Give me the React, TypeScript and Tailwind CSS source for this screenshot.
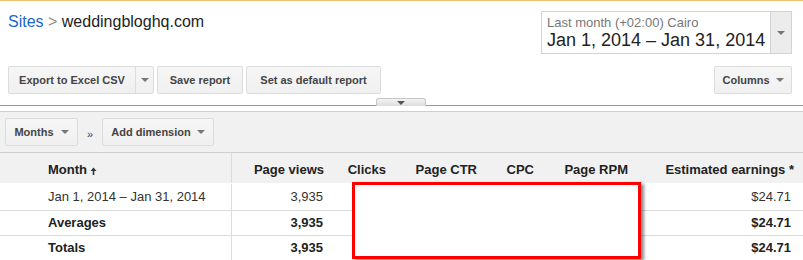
import type { ReactNode } from 'react';

function Caret({ color = '#777' }: { color?: string }) {
  return (
    <span
      className="inline-block w-0 h-0 border-l-[4px] border-r-[4px] border-t-[4px] border-l-transparent border-r-transparent"
      style={{ borderTopColor: color }}
    />
  );
}

function Btn({ children, className = '' }: { children: ReactNode; className?: string }) {
  return (
    <div
      className={`h-[28px] flex items-center justify-center border border-[#dcdcdc] rounded-[2px] bg-gradient-to-b from-[#f6f6f6] to-[#f0f0f0] text-[11px] font-bold text-[#444] ${className}`}
    >
      {children}
    </div>
  );
}

const COLS = 'grid grid-cols-[232px_100px_62px_91px_57px_94px_1fr]';

const ROWS = [
  { label: 'Jan 1, 2014 – Jan 31, 2014', views: '3,935', earn: '$24.71', bold: false, h: 'h-[28px] pt-px' },
  { label: 'Averages', views: '3,935', earn: '$24.71', bold: true, h: 'h-[25px]' },
  { label: 'Totals', views: '3,935', earn: '$24.71', bold: true, h: 'h-[25px]' },
];

export default function App() {
  return (
    <div className="w-[803px] h-[260px] overflow-hidden bg-white font-['Liberation_Sans',Arial,sans-serif] text-[#222]">
      {/* Top accent */}
      <div className="h-px bg-[#f0c36d]" />

      {/* Title + date range */}
      <div className="flex items-start justify-between pl-2 pr-[11px] pt-[10px]">
        <div className="mt-px text-[16px] leading-[20px]">
          <span className="text-[#1a66cc]">Sites</span>
          <span className="text-[#888]"> &gt; </span>
          <span className="text-[#222]">weddingbloghq.com</span>
        </div>
        <div className="w-[251px] h-[43px] flex border border-[#d3d3d3] bg-white">
          <div className="flex-1 pl-[5px] pt-[3px]">
            <div className="text-[13px] leading-[15px] text-[#777]">Last month (+02:00) Cairo</div>
            <div className="text-[18px] leading-[21px] text-[#222] whitespace-nowrap">Jan 1, 2014 – Jan 31, 2014</div>
          </div>
          <div className="w-[21px] flex items-center justify-center bg-[#ececec] border-l border-[#d3d3d3]">
            <Caret color="#777" />
          </div>
        </div>
      </div>

      {/* Action buttons */}
      <div className="flex items-start gap-[3px] pl-2 pr-[11px] mt-[12px]">
        <div className="w-[146px] h-[28px] flex border border-[#dcdcdc] rounded-[2px] bg-gradient-to-b from-[#f6f6f6] to-[#f0f0f0] text-[11px] font-bold text-[#444]">
          <div className="w-[127px] flex items-center justify-center border-r border-[#dcdcdc]">Export to Excel CSV</div>
          <div className="flex-1 flex items-center justify-center">
            <Caret />
          </div>
        </div>
        <Btn className="w-[86px]">Save report</Btn>
        <Btn className="w-[135px]">Set as default report</Btn>
        <Btn className="w-[78px] ml-auto gap-[6px]">
          <span>Columns</span>
          <Caret />
        </Btn>
      </div>

      {/* Drawer toggle line */}
      <div className="flex items-end mt-[4px] h-[8px]">
        <div className="w-[376px] h-px bg-[#6d9eeb]" />
        <div className="w-[50px] h-[8px] flex items-center justify-center border border-b-0 border-[#c6c6c6] rounded-t-[3px] bg-gradient-to-b from-[#f4f4f4] to-[#dcdcdc]">
          <Caret color="#555" />
        </div>
        <div className="flex-1 h-px bg-[#6d9eeb]" />
      </div>
      <div className="h-[5px] bg-white" />

      {/* Dimension toolbar */}
      <div className="h-[42px] flex items-start gap-0 pl-[5px] pt-[6px] bg-[#f1f1f1] border-t border-b border-[#cfcfcf]">
        <Btn className="w-[73px] gap-[7px]">
          <span>Months</span>
          <Caret />
        </Btn>
        <div className="w-[24px] h-[28px] flex items-center justify-center pt-[5px] text-[11px] text-[#444]">»</div>
        <Btn className="w-[112px] gap-[6px]">
          <span>Add dimension</span>
          <Caret />
        </Btn>
      </div>

      {/* Table */}
      <div className="relative">
        <div className={`${COLS} h-[30px] pt-[4px] bg-[#f1f1f1] text-[13px] font-bold text-[#222]`}>
          <div className="flex items-center gap-[3px] pl-[48px] border-r border-[#dcdcdc] -mt-[4px] pt-[4px]">
            <span>Month</span>
            <svg width="7" height="8" viewBox="0 0 7 8" className="mt-px">
              <path d="M3.5 0.5 L6.5 4 H4.3 V8 H2.7 V4 H0.5 Z" fill="#333" />
            </svg>
          </div>
          <div className="flex items-center justify-end pr-[8px]">Page views</div>
          <div className="flex items-center justify-end pr-[8px]">Clicks</div>
          <div className="flex items-center justify-end pr-[8px]">Page CTR</div>
          <div className="flex items-center justify-end pr-[8px]">CPC</div>
          <div className="flex items-center justify-end pr-[8px]">Page RPM</div>
          <div className="flex items-center justify-end pr-[9px]">Estimated earnings *</div>
        </div>

        {ROWS.map((r) => (
          <div
            key={r.label}
            className={`${COLS} ${r.h} border-b border-[#dcdcdc] text-[13px] ${r.bold ? 'font-bold text-[#222]' : 'text-[#333]'}`}
          >
            <div className="flex items-center pl-[48px] border-r border-[#dcdcdc] whitespace-nowrap">{r.label}</div>
            <div className="flex items-center justify-end pr-[9px]">{r.views}</div>
            <div />
            <div />
            <div />
            <div />
            <div className="flex items-center justify-end pr-[12px]">{r.earn}</div>
          </div>
        ))}

        {/* Redaction box */}
        <div className="absolute left-[352px] top-[29px] w-[289px] h-[77px] border-[3px] border-[#ff0000] bg-white shadow-[3px_2px_3px_rgba(0,0,0,0.45)]" />
      </div>
    </div>
  );
}
